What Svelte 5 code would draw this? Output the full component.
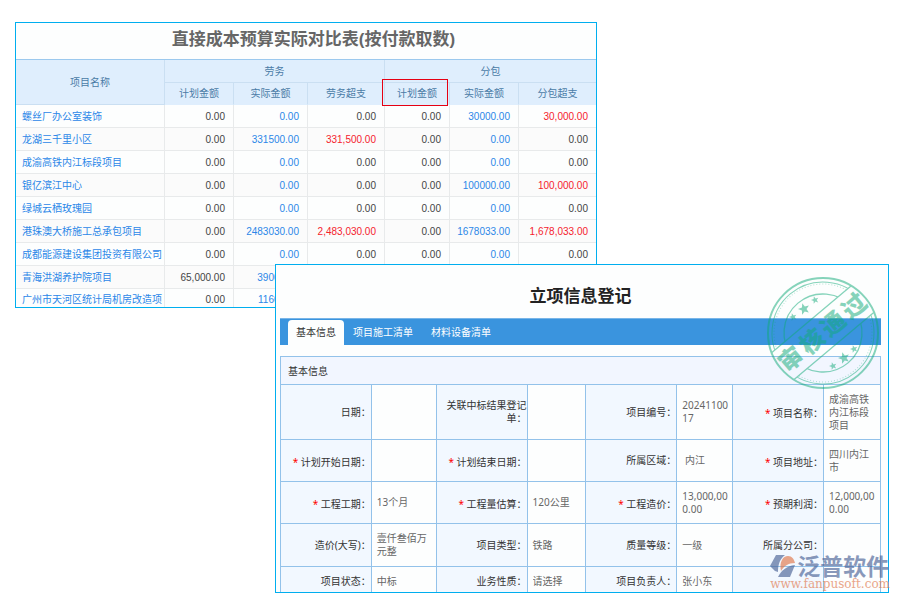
<script lang="ts">
	const reportCols = [149, 69, 74, 77, 65, 69, 77];
	const reportTotal = reportCols.reduce((sum, w) => sum + w, 0);

	const projects = [
		{ name: '螺丝厂办公室装饰', values: ['0.00', '0.00', '0.00', '0.00', '30000.00', '30,000.00'] },
		{ name: '龙湖三千里小区', values: ['0.00', '331500.00', '331,500.00', '0.00', '0.00', '0.00'] },
		{ name: '成渝高铁内江标段项目', values: ['0.00', '0.00', '0.00', '0.00', '0.00', '0.00'] },
		{ name: '银亿滨江中心', values: ['0.00', '0.00', '0.00', '0.00', '100000.00', '100,000.00'] },
		{ name: '绿城云栖玫瑰园', values: ['0.00', '0.00', '0.00', '0.00', '0.00', '0.00'] },
		{ name: '港珠澳大桥施工总承包项目', values: ['0.00', '2483030.00', '2,483,030.00', '0.00', '1678033.00', '1,678,033.00'] },
		{ name: '成都能源建设集团投资有限公司', values: ['0.00', '0.00', '0.00', '0.00', '0.00', '0.00'] },
		{ name: '青海洪湖养护院项目', values: ['65,000.00', '39000.00', '', '', '', ''] },
		{ name: '广州市天河区统计局机房改造项', values: ['0.00', '11600.00', '', '', '', ''] }
	];

	// actual amounts link to their detail page
	const isLink = (col: number) => col === 1 || col === 4;
	const isOver = (col: number, value: string) => (col === 2 || col === 5) && value !== '0.00';

	const tabs = ['基本信息', '项目施工清单', '材料设备清单'];
	let activeTab = $state(0);

	const formCols = [91, 65, 91, 59, 91, 56, 91, 57];
	const formTotal = formCols.reduce((sum, w) => sum + w, 0);

	type Field = { label: string; value?: string; required?: boolean; select?: boolean };

	const formRows: { size: string; fields: Field[] }[] = [
		{
			size: 'tall',
			fields: [
				{ label: '日期' },
				{ label: '关联中标结果登记单' },
				{ label: '项目编号', value: '2024110017' },
				{ label: '项目名称', value: '成渝高铁内江标段项目', required: true }
			]
		},
		{
			size: 'normal',
			fields: [
				{ label: '计划开始日期', required: true },
				{ label: '计划结束日期', required: true },
				{ label: '所属区域', value: '\u00a0内江' },
				{ label: '项目地址', value: '四川内江市', required: true }
			]
		},
		{
			size: 'normal',
			fields: [
				{ label: '工程工期', value: '13个月', required: true },
				{ label: '工程量估算', value: '120公里', required: true },
				{ label: '工程造价', value: '13,000,000.00', required: true },
				{ label: '预期利润', value: '12,000,000.00', required: true }
			]
		},
		{
			size: 'normal',
			fields: [
				{ label: '造价(大写)', value: '壹仟叁佰万元整' },
				{ label: '项目类型', value: '铁路' },
				{ label: '质量等级', value: '一级' },
				{ label: '所属分公司' }
			]
		},
		{
			size: 'short',
			fields: [
				{ label: '项目状态', value: '中标' },
				{ label: '业务性质', value: '请选择', select: true },
				{ label: '项目负责人', value: '张小东' },
				{ label: '' }
			]
		}
	];

	const stampChars = ['审', '核', '通', '过'];
	const stars = [
		{ x: -19, y: -24, r: 6 },
		{ x: -8, y: -33, r: 4 },
		{ x: -30, y: -16, r: 4 },
		{ x: 21, y: 25, r: 6 },
		{ x: 10, y: 33, r: 4 },
		{ x: 31, y: 16, r: 4 }
	];

	function starPoints(cx: number, cy: number, r: number) {
		const pts: string[] = [];
		for (let i = 0; i < 10; i++) {
			const len = i % 2 ? r * 0.42 : r;
			const a = (Math.PI / 5) * i - Math.PI / 2 - 0.3;
			pts.push(`${(cx + len * Math.cos(a)).toFixed(2)},${(cy + len * Math.sin(a)).toFixed(2)}`);
		}
		return pts.join(' ');
	}
</script>

<main class="page">
	<section class="panel report">
		<h1>直接成本预算实际对比表(按付款取数)</h1>
		<table>
			<colgroup>
				{#each reportCols as w}
					<col style="width: {(w / reportTotal) * 100}%" />
				{/each}
			</colgroup>
			<thead>
				<tr>
					<th rowspan="2">项目名称</th>
					<th colspan="3">劳务</th>
					<th colspan="3">分包</th>
				</tr>
				<tr>
					<th>计划金额</th>
					<th>实际金额</th>
					<th>劳务超支</th>
					<th class="marked">计划金额</th>
					<th>实际金额</th>
					<th>分包超支</th>
				</tr>
			</thead>
			<tbody>
				{#each projects as project}
					<tr>
						<td class="name"><a href="#project">{project.name}</a></td>
						{#each project.values as value, col}
							<td class:over={isOver(col, value)}>
								{#if isLink(col) && value}<a href="#detail">{value}</a>{:else}{value}{/if}
							</td>
						{/each}
					</tr>
				{/each}
			</tbody>
		</table>
	</section>

	<section class="panel form">
		<h2>立项信息登记</h2>
		<div class="tabs" role="tablist">
			{#each tabs as tab, i}
				<button
					role="tab"
					aria-selected={activeTab === i}
					class:active={activeTab === i}
					onclick={() => (activeTab = i)}>{tab}</button
				>
			{/each}
		</div>
		<div class="group">
			<h3>基本信息</h3>
			<table>
				<colgroup>
					{#each formCols as w}
						<col style="width: {(w / formTotal) * 100}%" />
					{/each}
				</colgroup>
				<tbody>
					{#each formRows as row}
						<tr class={row.size}>
							{#each row.fields as field}
								<th scope="row" class:required={field.required}>
									{#if field.required}<span class="star">*</span>{/if}
									{#if field.select}
										<label for="nature">{field.label}：</label>
									{:else if field.label}
										{field.label}：
									{/if}
								</th>
								<td>
									{#if field.select}
										<select id="nature"><option>{field.value}</option></select>
									{:else}
										{field.value ?? ''}
									{/if}
								</td>
							{/each}
						</tr>
					{/each}
				</tbody>
			</table>
		</div>

		<svg class="stamp" viewBox="-57 -57 114 114" aria-label="审核通过">
			<defs>
				<clipPath id="outside-band">
					<rect x="-60" y="-60" width="120" height="42" />
					<rect x="-60" y="17" width="120" height="43" />
				</clipPath>
			</defs>
			<circle r="55" fill="none" stroke-width="2" />
			<g transform="rotate(-40)">
				<g clip-path="url(#outside-band)" fill="none">
					<circle r="51" stroke-width="1" />
					<circle r="49" stroke-width="1" stroke-dasharray="1 2" opacity="0.6" />
					<circle r="39" stroke-width="1.3" />
				</g>
				<path d="M-52 -18H52M-52 17H52" stroke-width="1.3" />
				{#each stampChars as char, i}
					<text x={(i - 1.5) * 27.5} y="8" text-anchor="middle">{char}</text>
				{/each}
			</g>
			{#each stars as s}
				<polygon points={starPoints(s.x, s.y, s.r)} />
			{/each}
		</svg>

		<div class="watermark">
			<div class="brand">
				<svg viewBox="0 0 27 24" aria-hidden="true">
					<path class="blue" d="M6 1H15C10 5 8 10 8 18L5 17L0 12Z" />
					<path class="orange" d="M11 17C9 8 13 2 18 2C22 2 24 5 25 9C18 9 14 12 11 17Z" />
					<path class="blue" d="M25 11L20 23H8C11 17 16 12 25 11Z" />
				</svg>
				<span>泛普软件</span>
			</div>
			<div class="site">www.fanpusoft.com</div>
		</div>
	</section>
</main>

<style>
	:global(body) {
		background: #fff;
	}

	* {
		box-sizing: border-box;
	}

	/* the two panels share a row and overlap in the middle column */
	.page {
		display: grid;
		grid-template-columns: minmax(0, 260fr) minmax(0, 322fr) minmax(0, 292fr);
		align-items: start;
		padding: 22px 11px 7px 15px;
		font-family: 'Noto Sans', 'Noto Sans CJK SC', sans-serif;
		font-size: 10px;
		line-height: 13px;
	}

	.panel {
		position: relative;
		z-index: 0;
		grid-row: 1;
		border: 1px solid #00aeef;
		background: #fdfefe;
	}

	h1,
	h2,
	h3 {
		margin: 0;
	}

	table {
		width: 100%;
		table-layout: fixed;
		border-collapse: separate;
		border-spacing: 0;
	}

	th,
	td {
		padding: 0;
		font-weight: normal;
	}

	a {
		color: #2b87e8;
		text-decoration: none;
	}

	.report {
		grid-column: 1 / 3;
		font-family: 'Liberation Sans', 'Noto Sans CJK SC', sans-serif;
		color: #444;
	}

	.report h1 {
		height: 37px;
		padding-left: 15px;
		border-bottom: 1px solid #9cc9ee;
		font-size: 17px;
		line-height: 34px;
		text-align: center;
		color: #666;
	}

	.report th {
		height: 23px;
		border-right: 1px solid #cadff2;
		border-bottom: 1px solid #cadff2;
		background: #dfeefd;
		color: #4a7ba6;
	}

	.report thead tr:last-child th {
		height: 22px;
		border-bottom-color: #dfeefd;
	}

	.report th.marked {
		position: relative;
		z-index: 1;
	}

	.marked::after {
		content: '';
		position: absolute;
		inset: -4px 1px -2px -3px;
		border: 1px solid #e60012;
	}

	.report td {
		height: 23px;
		padding-right: 8px;
		border-right: 1px solid #e8eaeb;
		border-bottom: 1px solid #e8eaeb;
		text-align: right;
		white-space: nowrap;
	}

	.report th:last-child,
	.report td:last-child {
		border-right: none;
	}

	.report tbody tr:nth-child(even) {
		background: #fbfbfb;
	}

	.report tbody tr:last-child td {
		height: 18px;
		padding-top: 2px;
		border-bottom: none;
	}

	.report td.name {
		padding: 0 0 0 6px;
		text-align: left;
		overflow: hidden;
	}

	.report td.over {
		color: #f5222d;
	}

	.form {
		z-index: 1;
		grid-column: 2 / 4;
		margin-top: 242px;
		padding: 0 7px 0 4px;
		color: #333;
	}

	.form h2 {
		height: 53px;
		font-size: 17px;
		line-height: 62px;
		text-align: center;
		color: #222;
	}

	.tabs {
		display: flex;
		height: 27px;
		padding: 1px 8px 0;
		border-top: 1px solid #78b5e8;
		background: #3a94de;
	}

	.tabs button {
		padding: 0 9px;
		border: none;
		border-radius: 4px 4px 0 0;
		background: none;
		font: inherit;
		color: #fff;
	}

	.tabs button.active {
		padding: 0 8px;
		background: #fdfefe;
		color: #333;
	}

	.group {
		margin-top: 11px;
		border-left: 1px solid #93c2ea;
	}

	.group h3 {
		height: 29px;
		padding-left: 7px;
		border: 1px solid #93c2ea;
		border-width: 1px 1px 1px 0;
		background: #f2f6ff;
		font-size: 10px;
		font-weight: normal;
		line-height: 28px;
	}

	.group th {
		border-right: 1px solid #93c2ea;
		border-bottom: 1px solid #93c2ea;
		background: #f2f8ff;
		text-align: right;
	}

	.group th.required {
		padding-top: 3px;
	}

	.group td {
		padding: 0 3px 0 5px;
		border-right: 1px solid #93c2ea;
		border-bottom: 1px solid #93c2ea;
		color: #666;
		word-break: break-all;
	}

	.tall {
		height: 55px;
	}

	.normal {
		height: 42px;
	}

	.normal:nth-child(4) {
		height: 43px;
	}

	.short {
		height: 25px;
	}

	.group .short th,
	.group .short td {
		padding-top: 4px;
		border-bottom: none;
	}

	.star {
		color: #f00;
	}

	select {
		display: block;
		appearance: none;
		padding: 0;
		border: none;
		background: none;
		font: inherit;
		color: inherit;
	}

	.stamp {
		position: absolute;
		top: 11px;
		right: 8px;
		width: 114px;
		height: 114px;
		opacity: 0.5;
		fill: #10aa78;
		stroke: #10aa78;
		pointer-events: none;
	}

	.stamp text,
	.stamp polygon {
		stroke: none;
	}

	.stamp text {
		font-family: 'Noto Sans CJK SC', sans-serif;
		font-size: 24px;
		font-weight: 900;
	}

	.watermark {
		position: absolute;
		right: -2px;
		bottom: 1px;
		opacity: 0.65;
		pointer-events: none;
	}

	.brand {
		display: flex;
		align-items: center;
		height: 24px;
		font-size: 23px;
		font-weight: bold;
		line-height: 24px;
		color: #4a6296;
	}

	.brand svg {
		width: 27px;
		height: 24px;
	}

	.blue {
		fill: #4a6296;
	}

	.orange {
		fill: #e0764a;
	}

	.site {
		font-family: 'DejaVu Serif', serif;
		font-size: 12px;
		line-height: 13px;
		text-align: right;
		color: #e0764a;
	}
</style>
